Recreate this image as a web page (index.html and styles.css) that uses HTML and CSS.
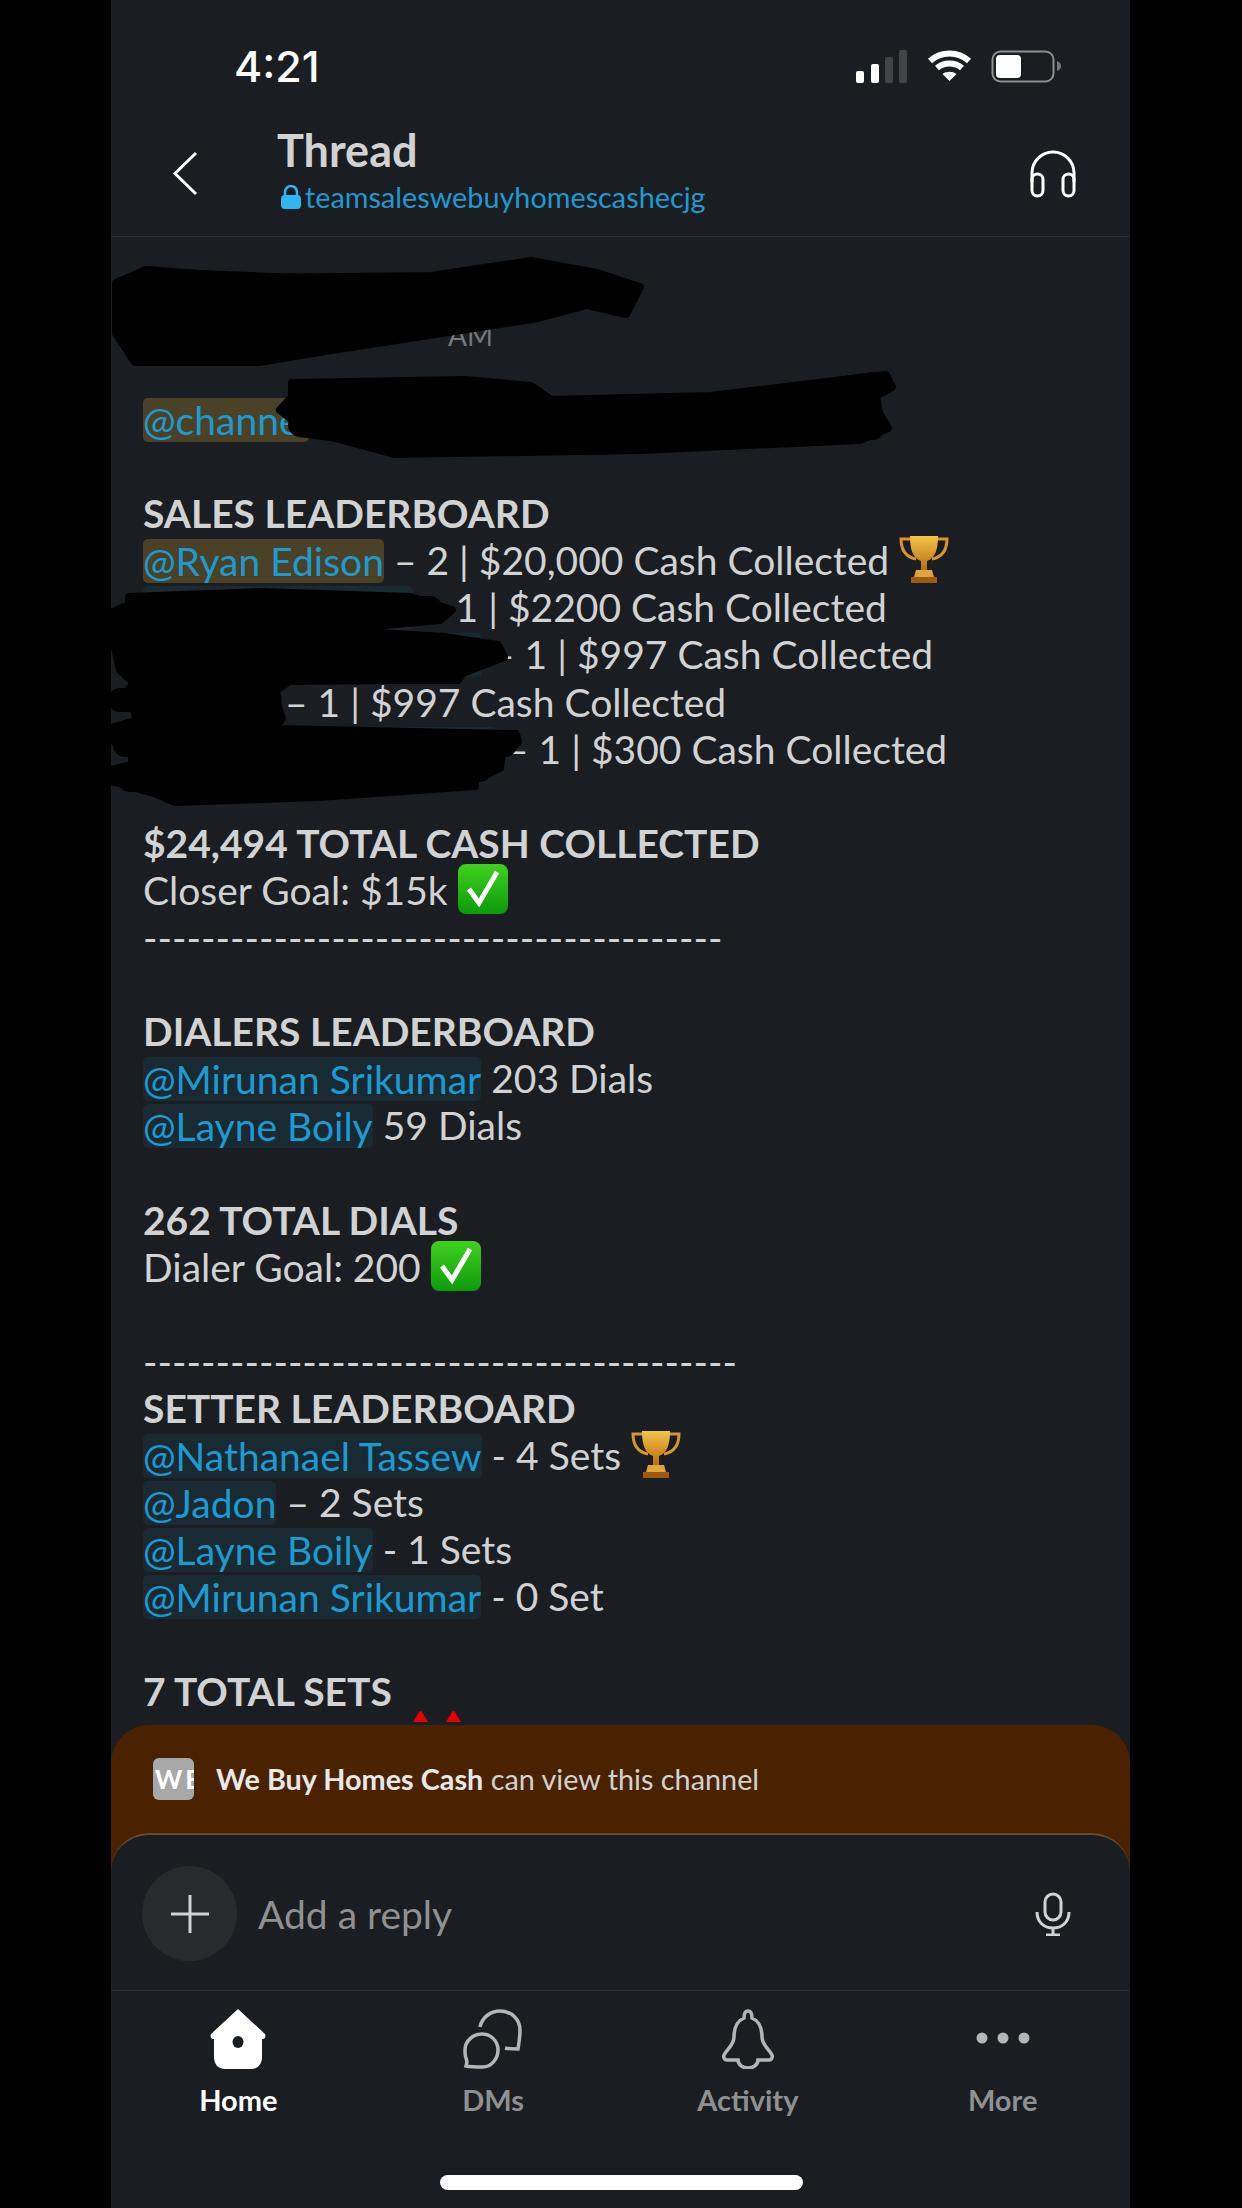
FILE: index.html
```html
<!DOCTYPE html>
<html lang="en">

<head>
    <meta charset="UTF-8">
    <meta name="viewport" content="width=device-width, initial-scale=1.0">
    <title>Thread</title>
    <link rel="stylesheet" href="styles.css">
</head>

<body>
    <svg width="0" height="0" class="defs">
        <defs>
            <linearGradient id="gold" x1="0" y1="0" x2="0" y2="1">
                <stop offset="0" stop-color="#f5c44a" />
                <stop offset="1" stop-color="#b86e12" />
            </linearGradient>
            <linearGradient id="green" x1="0" y1="0" x2="0" y2="1">
                <stop offset="0" stop-color="#3fd21f" />
                <stop offset="1" stop-color="#0d9a0a" />
            </linearGradient>
            <symbol id="trophy" viewBox="0 0 50 50">
                <path d="M12 5H2c0 11 5 18 15 20M38 5h10c0 11-5 18-15 20" fill="none" stroke="#d9962a" stroke-width="3" />
                <path d="M11 2h28c0 14-3 22-11 25v9h-6v-9C14 24 11 16 11 2z" fill="url(#gold)" />
                <path d="M17 36h16l2 7H15z" fill="#e0a63a" />
                <rect x="12" y="43" width="26" height="6" fill="#9a5a12" />
            </symbol>
            <symbol id="check" viewBox="0 0 50 50">
                <rect width="50" height="50" rx="8" fill="url(#green)" />
                <path d="M11 25l10 14L39 8" fill="none" stroke="#fff" stroke-width="5" />
            </symbol>
        </defs>
    </svg>

    <div class="screen">
        <div class="status">
            <span class="clock">4:21</span>
            <div class="status-icons">
                <svg class="signal" width="52" height="33" viewBox="0 0 52 33">
                    <rect x="0" y="21" width="8" height="12" rx="2" fill="#fff" />
                    <rect x="15" y="14" width="8" height="19" rx="2" fill="#fff" />
                    <rect x="29" y="7" width="8" height="26" rx="2" fill="#434548" />
                    <rect x="43" y="0" width="8" height="33" rx="2" fill="#434548" />
                </svg>
                <svg class="wifi" width="45" height="33" viewBox="0 0 45 33" fill="none" stroke="#fff" stroke-width="6">
                    <path d="M3 11c11-10 28-10 39 0" />
                    <path d="M10 18c7-6 18-6 25 0" />
                    <path d="M22.500 31l-7-7c4-3 10-3 14 0z" fill="#fff" stroke="none" />
                </svg>
                <svg class="battery" width="71" height="33" viewBox="0 0 71 33">
                    <rect x="1.500" y="1.500" width="61" height="30" rx="8" fill="none" stroke="#8f9092" stroke-width="2" />
                    <rect x="5" y="5" width="25" height="23" rx="4" fill="#fff" />
                    <path d="M66 11c3 1 4 3 4 5s-1 4-4 5z" fill="#77787a" />
                </svg>
            </div>
        </div>

        <header class="topbar">
            <svg class="back" width="26" height="45" viewBox="0 0 26 45" fill="none" stroke="#fff" stroke-width="3">
                <path d="M24 2L3 22.500 24 43" />
            </svg>
            <div class="title">
                <div class="title-main">Thread</div>
                <div class="title-sub">
                    <svg width="22" height="25" viewBox="0 0 22 25">
                        <path d="M5 11V7a6 6 0 0 1 12 0v4" fill="none" stroke="#2fb6f5" stroke-width="2.500" />
                        <rect x="1" y="10" width="20" height="14" rx="4" fill="#2fb6f5" />
                    </svg>
                    <span>teamsaleswebuyhomescashecjg</span>
                </div>
            </div>
            <svg class="headphones" width="48" height="48" viewBox="0 0 48 48" fill="none" stroke="#fff" stroke-width="3">
                <path d="M3 32V23a21 21 0 0 1 42 0v9" />
                <rect x="3" y="24" width="11" height="22" rx="5.500" />
                <rect x="34" y="24" width="11" height="22" rx="5.500" />
            </svg>
        </header>

        <main class="thread">
            <div class="meta">AM</div>

            <div class="block">
                <div class="line"><span class="mention mention-hl at-channel">@channel</span></div>
            </div>

            <div class="block">
                <div class="line strong">SALES LEADERBOARD</div>
                <div class="line"><span class="mention mention-hl">@Ryan Edison</span> – 2 | $20,000 Cash Collected <svg class="emoji"><use href="#trophy" /></svg></div>
                <div class="line"><span class="mention blank-a">@</span> – 1 | $2200 Cash Collected</div>
                <div class="line"><span class="mention blank-b">@</span> – 1 | $997 Cash Collected</div>
                <div class="line"><span class="mention blank-c">@</span> – 1 | $997 Cash Collected</div>
                <div class="line"><span class="mention blank-d">@</span> – 1 | $300 Cash Collected</div>
            </div>

            <div class="block">
                <div class="line strong">$24,494 TOTAL CASH COLLECTED</div>
                <div class="line">Closer Goal: $15k <svg class="emoji"><use href="#check" /></svg></div>
                <div class="line">----------------------------------------</div>
            </div>

            <div class="block">
                <div class="line strong">DIALERS LEADERBOARD</div>
                <div class="line"><span class="mention">@Mirunan Srikumar</span> 203 Dials</div>
                <div class="line"><span class="mention">@Layne Boily</span> 59 Dials</div>
            </div>

            <div class="block">
                <div class="line strong">262 TOTAL DIALS</div>
                <div class="line">Dialer Goal: 200 <svg class="emoji"><use href="#check" /></svg></div>
            </div>

            <div class="block">
                <div class="line">-----------------------------------------</div>
                <div class="line strong">SETTER LEADERBOARD</div>
                <div class="line"><span class="mention">@Nathanael Tassew</span> - 4 Sets <svg class="emoji"><use href="#trophy" /></svg></div>
                <div class="line"><span class="mention">@Jadon</span> – 2 Sets</div>
                <div class="line"><span class="mention">@Layne Boily</span> - 1 Sets</div>
                <div class="line"><span class="mention">@Mirunan Srikumar</span> - 0 Set</div>
            </div>

            <div class="line strong">7 TOTAL SETS</div>
            <svg class="tips" width="48" height="11" viewBox="0 0 48 11">
                <path d="M0 11L6 1q1.500-2 3 0l6 10zM33 11l6-10q1.500-2 3 0l6 10z" fill="#e60000" />
            </svg>
        </main>

        <div class="sheet">
            <div class="notice">
                <span class="team-badge"><span>WE</span></span>
                <span><b>We Buy Homes Cash</b> can view this channel</span>
            </div>
            <div class="bottom">
                <div class="composer">
                    <span class="plus">
                        <svg width="42" height="42" viewBox="0 0 42 42" stroke="#d1d2d3" stroke-width="3">
                            <path d="M21 2v38M2 21h38" />
                        </svg>
                    </span>
                    <span class="placeholder">Add a reply</span>
                    <svg class="mic" width="36" height="44" viewBox="0 0 36 44" fill="none" stroke="#d1d2d3" stroke-width="3">
                        <rect x="10" y="2" width="16" height="26" rx="8" />
                        <path d="M2 20c0 10 7 16 16 16s16-6 16-16M18 36v7M11 43h14" />
                    </svg>
                </div>
                <nav class="tabs">
                    <div class="tab tab-on">
                        <svg width="60" height="60" viewBox="0 0 60 60">
                            <path d="M30 0L57 25c1 2 0 5-2 5h-1v18c0 7-4 12-11 12H17C10 60 6 55 6 48V30H5c-2 0-3-3-2-5z" fill="#fff" />
                            <ellipse cx="30" cy="33" rx="5.500" ry="6" fill="#1a1d21" />
                        </svg>
                        <span>Home</span>
                    </div>
                    <div class="tab">
                        <svg width="60" height="60" viewBox="0 0 60 60" fill="none" stroke="#b4b5b6" stroke-width="3.500">
                            <path d="M17 18C19 8 28 2 37 2c12 0 20 9 20 19 0 7-1 13-2 19-5 0-9 0-13-1" />
                            <path d="M20 58c-6 0-12 0-17-1 1-3 1-6 0-8-1-2-1-5-1-8 0-9 8-16 17-16s16 7 16 16-7 17-15 17z" />
                        </svg>
                        <span>DMs</span>
                    </div>
                    <div class="tab">
                        <svg width="60" height="60" viewBox="0 0 60 60" fill="none" stroke="#b4b5b6" stroke-width="3.500">
                            <path d="M30 2c3 0 4 3 4 7 7 3 10 9 10 19 0 8 7 12 10 18 1 3-1 5-3 5H40c0 5-5 8-10 8s-10-3-10-8H9c-2 0-4-2-3-5 3-6 10-10 10-18 0-10 3-16 10-19 0-4 1-7 4-7z" />
                        </svg>
                        <span>Activity</span>
                    </div>
                    <div class="tab">
                        <svg width="60" height="60" viewBox="0 0 60 60" fill="#b4b5b6">
                            <circle cx="9" cy="29" r="5.500" />
                            <circle cx="30" cy="29" r="5.500" />
                            <circle cx="51" cy="29" r="5.500" />
                        </svg>
                        <span>More</span>
                    </div>
                </nav>
                <div class="home-bar"></div>
            </div>
        </div>
    </div>

    <!-- scribbled out parts of the screenshot -->
    <svg class="scribble" viewBox="0 0 1242 2208">
        <path d="M146 270L249 278 431 276 531 261 597 273 640 287 626 314 587 305 538 318 319 352 259 362 135 362 116 333 116 283z" />
        <path d="M292 383L465 380 531 386 551 400 710 396 886 375 892 387 876 396 879 413 888 428 860 440 640 450 394 454 306 430 280 410 292 397z" />
        <path d="M129 597L261 592 410 597 452 610 440 620 330 630 444 637 498 645 504 657 463 673 458 680 387 680 289 681 273 693 282 718 274 729 516 734 518 742 502 752 500 768 475 780 475 786 318 797 175 802 157 794 111 781 111 770 132 765 132 750 111 740 111 728 138 720 126 693 134 683 120 670 111 630 111 613 129 605z" />
        <path class="strand" d="M150 280L400 290M135 345L260 350M300 392L520 394M300 425L420 440M720 405L875 384M720 425L868 412M720 438L872 428" />
        <path class="strand" d="M140 610L430 608M130 655L480 655M120 700L270 700M125 745L505 745M130 780L480 770" />
    </svg>
</body>

</html>
```

FILE: styles.css
```css
body {
    margin: 0;
    background-color: #000;
    font-family: Lato, "Open Sans", sans-serif;
    color: #d1d2d3;
    position: relative;
    height: 2208px;
    overflow: hidden;
}

.defs {
    display: block;
    height: 0;
}

.screen {
    width: 1019px;
    height: 2208px;
    margin-left: 111px;
    background-color: #1a1d21;
    display: flex;
    flex-direction: column;
}

.status {
    height: 132px;
    flex: none;
    box-sizing: border-box;
    padding: 45px 68px 0 123px;
    display: flex;
    justify-content: space-between;
    align-items: flex-start;
}

.clock {
    font-family: Inter, sans-serif;
    font-size: 43px;
    line-height: 42px;
    font-weight: 500;
    color: #fff;
}

.status-icons {
    display: flex;
    gap: 19px;
    padding-top: 5px;
}

.topbar {
    height: 105px;
    flex: none;
    box-sizing: border-box;
    border-bottom: 1px solid #2a2d31;
    display: flex;
    align-items: flex-start;
    padding: 0 53px 0 61px;
}

.back {
    margin-top: 19px;
    flex: none;
}

.title {
    margin-left: 79px;
    flex: 1;
}

.title-main {
    font-size: 45px;
    line-height: 36px;
    font-weight: 700;
}

.title-sub {
    display: flex;
    align-items: center;
    gap: 3px;
    margin-top: 11px;
    padding-left: 3px;
    font-size: 28.8px;
    line-height: 36px;
    color: #1d9bd1;
}

.headphones {
    margin-top: 18px;
}

.thread {
    flex: 1;
    min-height: 0;
    overflow: hidden;
    padding: 0 32px;
}

.meta {
    height: 159px;
    box-sizing: border-box;
    padding: 86px 0 0 305px;
    font-size: 28px;
    line-height: 24px;
    color: #77787a;
}

.block {
    margin-bottom: 47.1px;
}

.line {
    height: 47.1px;
    line-height: 47.1px;
    font-size: 39px;
    white-space: nowrap;
}

.strong {
    font-weight: 700;
}

.mention {
    display: inline-block;
    height: 44px;
    line-height: 44px;
    vertical-align: top;
    margin-top: 1.5px;
    border-radius: 5px;
    color: #1d9bd1;
    background-color: #1a2a33;
}

.mention-hl {
    background-color: #4a4126;
}

.at-channel {
    width: 166px;
    overflow: hidden;
}

/* names under the scribble, only the chip width shows */
.blank-a {
    width: 270px;
}

.blank-b {
    width: 339px;
}

.blank-c {
    width: 132px;
}

.blank-d {
    width: 353px;
}

.emoji {
    width: 50px;
    height: 50px;
    margin-block: -6px;
    vertical-align: -3px;
}

.tips {
    display: block;
    margin: -4px 0 0 270px;
}

.sheet {
    flex: none;
    height: 483px;
    background-color: #4a2200;
    border-radius: 38px 38px 0 0;
    display: flex;
    flex-direction: column;
}

.notice {
    height: 108px;
    flex: none;
    box-sizing: border-box;
    padding: 33px 42px 0;
    display: flex;
    align-items: flex-start;
    gap: 22px;
    font-size: 28.8px;
    line-height: 42px;
    color: #d1d2d3;
}

.notice b {
    color: #e8e8e8;
}

.team-badge {
    width: 41px;
    height: 42px;
    flex: none;
    border-radius: 6px;
    background-color: #a8a8a8;
    color: #fff;
    font-size: 26px;
    font-weight: 700;
    letter-spacing: 3px;
    overflow: hidden;
    padding-left: 2px;
    box-sizing: border-box;
}

.bottom {
    flex: 1;
    background-color: #1a1d21;
    border-radius: 38px 38px 0 0;
    border-top: 2px solid #6a4a2c;
    display: flex;
    flex-direction: column;
}

.composer {
    height: 156px;
    flex: none;
    box-sizing: border-box;
    border-bottom: 1px solid #2a2d31;
    display: flex;
    align-items: center;
    padding: 2px 59px 0 31px;
    font-size: 39px;
}

.plus {
    width: 95px;
    height: 95px;
    flex: none;
    border-radius: 50%;
    background-color: #272b2e;
    display: flex;
    align-items: center;
    justify-content: center;
}

.placeholder {
    flex: 1;
    margin-left: 21px;
    color: #8f9092;
}

.tabs {
    display: grid;
    grid-template-columns: repeat(4, 1fr);
    padding-top: 18px;
}

.tab {
    display: flex;
    flex-direction: column;
    align-items: center;
    font-size: 29px;
    line-height: 34px;
    font-weight: 700;
    color: #8f9092;
    gap: 14px;
}

.tab-on {
    color: #fff;
}

.home-bar {
    width: 363px;
    height: 15px;
    border-radius: 8px;
    background-color: #fff;
    margin: 58px 0 0 329px;
}

.scribble {
    position: absolute;
    left: 0;
    top: 0;
    width: 1242px;
    height: 2208px;
    pointer-events: none;
}

.scribble path {
    fill: #000;
    stroke: #000;
    stroke-width: 8;
    stroke-linejoin: round;
}

.scribble .strand {
    fill: none;
    stroke-width: 24;
    stroke-linecap: round;
}
```
